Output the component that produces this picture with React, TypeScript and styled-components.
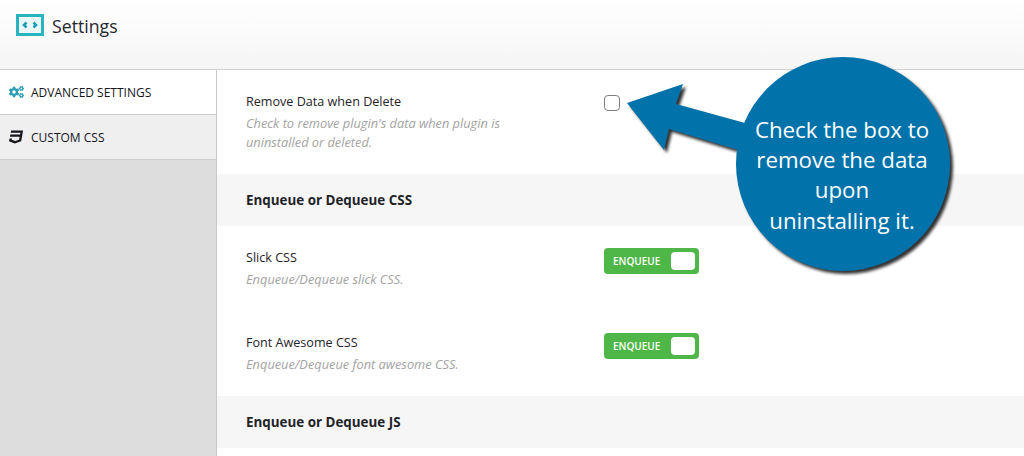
import styled, { createGlobalStyle } from 'styled-components';
import { FaCogs, FaCss3 } from 'react-icons/fa';

const GlobalStyle = createGlobalStyle`
  html, body {
    margin: 0;
    padding: 0;
    background: #fff;
  }
  body {
    font-family: "Open Sans", "Noto Sans", "Liberation Sans", sans-serif;
    color: #23282d;
    overflow: hidden;
  }
`;

const Page = styled.div`
  position: relative;
  width: 1024px;
  height: 456px;
  overflow: hidden;
`;

const Header = styled.header`
  display: flex;
  align-items: flex-start;
  gap: 8px;
  box-sizing: border-box;
  height: 70px;
  padding: 14px 0 0 16px;
  background: linear-gradient(#ffffff, #f5f5f5);
  border-bottom: 1px solid #d2d2d2;
`;

const Logo = styled.svg`
  display: block;
  width: 28px;
  height: 22px;
`;

const Title = styled.h1`
  margin: 0;
  font-size: 17.7px;
  line-height: 24px;
  font-weight: 400;
  color: #26262f;
`;

const Body = styled.div`
  display: flex;
  height: 386px;
`;

const Sidebar = styled.nav`
  flex: none;
  width: 216px;
  background: #dddddd;
  border-right: 1px solid #c9c9c9;
`;

const Tab = styled.div<{ $active?: boolean }>`
  display: flex;
  align-items: center;
  gap: 7px;
  box-sizing: border-box;
  height: 45px;
  padding-left: 9px;
  font-size: 12px;
  color: #15151c;
  background: ${(p) => (p.$active ? '#ffffff' : '#efefef')};
  border-bottom: 1px solid #cfcfcf;
`;

const TabIcon = styled.span<{ $color: string }>`
  display: flex;
  justify-content: center;
  width: 15px;
  font-size: 16px;
  color: ${(p) => p.$color};
`;

const Content = styled.main`
  flex: 1;
`;

const Row = styled.section<{ $height: number }>`
  display: flex;
  box-sizing: border-box;
  height: ${(p) => p.$height}px;
  padding: 21px 0 0 29px;
`;

const RowText = styled.div`
  flex: none;
  width: 358px;
`;

const RowTitle = styled.div`
  font-size: 12.6px;
  line-height: 22px;
  color: #1f2328;
`;

const RowDesc = styled.p`
  width: 290px;
  margin: 1px 0 0;
  font-size: 12.8px;
  line-height: 19px;
  font-style: italic;
  color: #a3a3a3;
`;

const SectionHead = styled.h2`
  box-sizing: border-box;
  height: 52px;
  margin: 0;
  padding-left: 29px;
  font-size: 13.4px;
  line-height: 52px;
  font-weight: 700;
  color: #1f2328;
  background: #f6f6f6;
`;

const Checkbox = styled.span`
  display: block;
  box-sizing: border-box;
  width: 16px;
  height: 16px;
  margin-top: 4px;
  background: #fff;
  border: 1px solid #7d7d7d;
  border-radius: 4px;
`;

const Toggle = styled.div`
  display: flex;
  align-items: center;
  justify-content: space-between;
  box-sizing: border-box;
  width: 95px;
  height: 26px;
  margin-top: 1px;
  padding: 0 4px 0 9px;
  font-size: 10px;
  font-weight: 600;
  color: #fff;
  background: #4fb748;
  border-radius: 4px;
`;

const Knob = styled.span`
  display: block;
  width: 24px;
  height: 18px;
  background: #fff;
  border-radius: 4px;
`;

const Callout = styled.svg`
  position: absolute;
  left: 600px;
  top: 50px;
  width: 380px;
  height: 240px;
  filter: drop-shadow(3px 3px 1.5px rgba(0, 0, 0, 0.8));
`;

const CalloutText = styled.div`
  position: absolute;
  left: 732px;
  top: 115px;
  width: 220px;
  font-family: "Open Sans", "Noto Sans", sans-serif;
  font-size: 22.3px;
  line-height: 30.2px;
  text-align: center;
  color: #fff;
`;

function App() {
  return (
    <Page>
      <GlobalStyle />
      <Header>
        <Logo viewBox="0 0 28 22">
          <rect x="1.500" y="1.500" width="25" height="19" fill="#e9f7f9" stroke="#2ab4c0" strokeWidth="3" />
          <path d="M10.500 8.500L8 11l2.500 2.500M17.500 8.500L20 11l-2.500 2.500" fill="none" stroke="#1a9cb4" strokeWidth="2.500" />
        </Logo>
        <Title>Settings</Title>
      </Header>
      <Body>
        <Sidebar>
          <Tab $active>
            <TabIcon $color="#2a9fb0">
              <FaCogs />
            </TabIcon>
            ADVANCED SETTINGS
          </Tab>
          <Tab>
            <TabIcon $color="#15151c">
              <FaCss3 />
            </TabIcon>
            CUSTOM CSS
          </Tab>
        </Sidebar>
        <Content>
          <Row $height={104}>
            <RowText>
              <RowTitle>Remove Data when Delete</RowTitle>
              <RowDesc>Check to remove plugin's data when plugin is uninstalled or deleted.</RowDesc>
            </RowText>
            <Checkbox />
          </Row>
          <SectionHead>Enqueue or Dequeue CSS</SectionHead>
          <Row $height={85}>
            <RowText>
              <RowTitle>Slick CSS</RowTitle>
              <RowDesc>Enqueue/Dequeue slick CSS.</RowDesc>
            </RowText>
            <Toggle>
              ENQUEUE
              <Knob />
            </Toggle>
          </Row>
          <Row $height={85}>
            <RowText>
              <RowTitle>Font Awesome CSS</RowTitle>
              <RowDesc>Enqueue/Dequeue font awesome CSS.</RowDesc>
            </RowText>
            <Toggle>
              ENQUEUE
              <Knob />
            </Toggle>
          </Row>
          <SectionHead>Enqueue or Dequeue JS</SectionHead>
        </Content>
      </Body>
      <Callout viewBox="600 50 380 240">
        <path d="M627 103L683 84L676 104L745 123L738 150L669 129L664 150Z" fill="#0272aa" />
        <circle cx="843" cy="164" r="107" fill="#0272aa" />
      </Callout>
      <CalloutText>
        Check the box to
        <br />
        remove the data
        <br />
        upon
        <br />
        uninstalling it.
      </CalloutText>
    </Page>
  );
}

export default App;
